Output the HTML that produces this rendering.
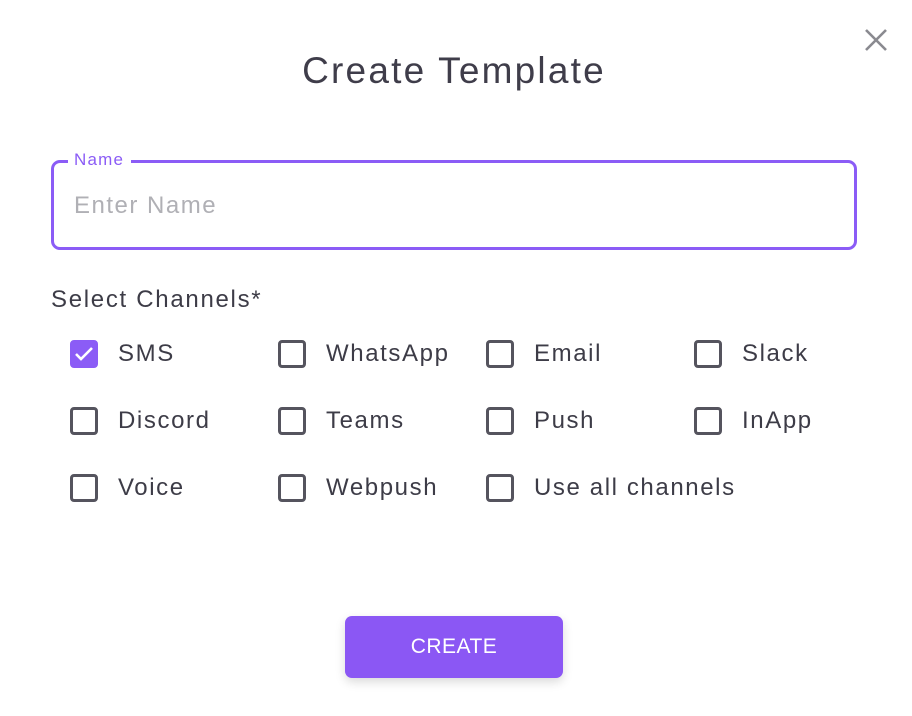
<!DOCTYPE html>
<html><head><meta charset="utf-8"><style>
*{box-sizing:border-box;margin:0;padding:0}
body{width:912px;height:716px;background:#fff;font-family:"Liberation Sans",sans-serif;color:#3d3c47;position:relative;overflow:hidden}
.t{position:absolute;left:0;width:908px;text-align:center;top:50px;font-size:37px;letter-spacing:2.2px;color:#3f3d4a}
.x{position:absolute;left:864px;top:28px}
.box{position:absolute;left:51px;top:160px;width:806px;height:90px;border:3px solid #8b5cf6;border-radius:9px}
.lab{position:absolute;left:68px;top:150px;background:#fff;padding:0 7px 0 6px;font-size:17px;letter-spacing:1.2px;color:#8b5cf6}
.ph{position:absolute;left:74px;top:192px;font-size:24px;letter-spacing:1.5px;color:#b0b0b5}
.sc{position:absolute;left:51px;top:286px;font-size:24px;letter-spacing:1.7px}
.cb{position:absolute;width:28px;height:28px;border:3px solid #55545e;border-radius:4px}
.cb.on{background:#8b5cf6;border-color:#8b5cf6}
.l{position:absolute;font-size:24px;line-height:28px;letter-spacing:1.6px}
.btn{position:absolute;left:345px;top:616px;width:218px;height:62px;background:#8b57f4;border-radius:7px;color:#fff;font-size:21px;text-align:center;line-height:62px;letter-spacing:.5px;box-shadow:0 4px 10px rgba(0,0,0,.15)}
</style></head><body>
<div class="t">Create Template</div>
<svg class="x" width="24" height="24" viewBox="0 0 24 24"><path d="M2 2L22 22M22 2L2 22" stroke="#8a8a90" stroke-width="2.6"/></svg>
<div class="box"></div><div class="lab">Name</div><div class="ph">Enter Name</div>
<div class="sc">Select Channels*</div>

<div class="cb on" style="left:70px;top:340px"><svg width="22" height="22" viewBox="0 0 22 22" style="position:absolute;left:0;top:0"><path d="M3 11l5 5 11-11" stroke="#fff" stroke-width="2.6" fill="none"/></svg></div><div class="l" style="left:118px;top:340px">SMS</div>
<div class="cb" style="left:278px;top:340px"></div><div class="l" style="left:326px;top:340px">WhatsApp</div>
<div class="cb" style="left:486px;top:340px"></div><div class="l" style="left:534px;top:340px">Email</div>
<div class="cb" style="left:694px;top:340px"></div><div class="l" style="left:742px;top:340px">Slack</div>

<div class="cb" style="left:70px;top:407px"></div><div class="l" style="left:118px;top:407px">Discord</div>
<div class="cb" style="left:278px;top:407px"></div><div class="l" style="left:326px;top:407px">Teams</div>
<div class="cb" style="left:486px;top:407px"></div><div class="l" style="left:534px;top:407px">Push</div>
<div class="cb" style="left:694px;top:407px"></div><div class="l" style="left:742px;top:407px">InApp</div>

<div class="cb" style="left:70px;top:474px"></div><div class="l" style="left:118px;top:474px">Voice</div>
<div class="cb" style="left:278px;top:474px"></div><div class="l" style="left:326px;top:474px">Webpush</div>
<div class="cb" style="left:486px;top:474px"></div><div class="l" style="left:534px;top:474px">Use all channels</div>

<div class="btn">CREATE</div>
</body></html>
